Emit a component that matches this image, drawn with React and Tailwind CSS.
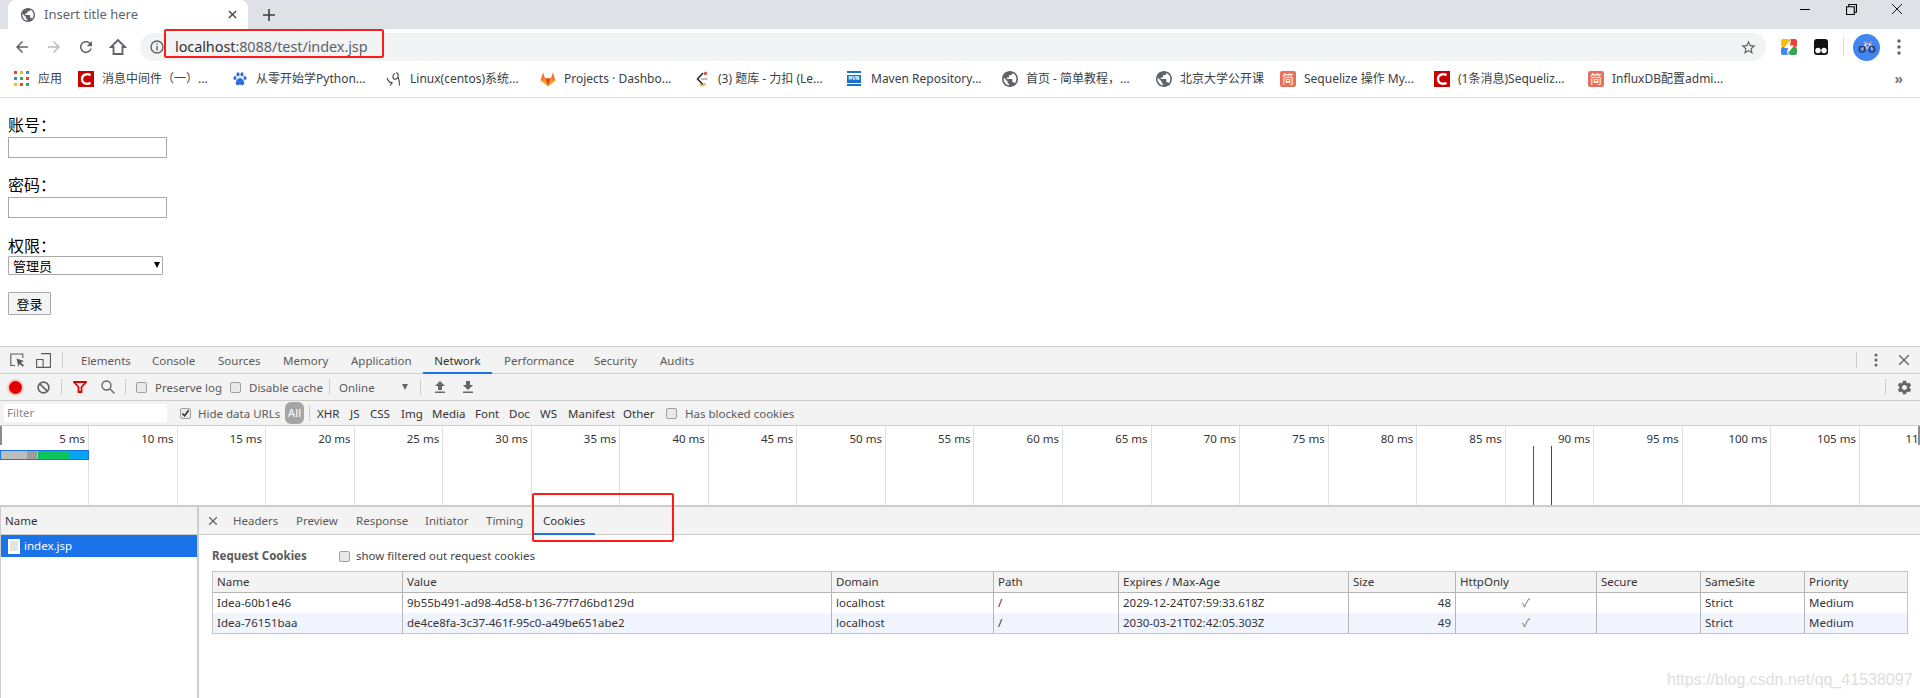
import React from "react";

const DEV = "font-['Noto_Sans','Noto_Sans_CJK_SC',sans-serif]";
// devtools labels sit one pixel under the centre of their row
const NUDGE = "relative top-px";

const GLOBE =
  "M12 2C6.48 2 2 6.48 2 12s4.48 10 10 10 10-4.48 10-10S17.52 2 12 2zm-1 17.93c-3.95-.49-7-3.85-7-7.93 0-.62.08-1.21.21-1.79L9 15v1c0 1.1.9 2 2 2v1.93zm6.9-2.54c-.26-.81-1-1.39-1.9-1.39h-1v-3c0-.55-.45-1-1-1H8v-2h2c.55 0 1-.45 1-1V7h2c1.1 0 2-.9 2-2v-.41c2.93 1.19 5 4.06 5 7.41 0 2.08-.8 3.97-2.1 5.39z";
const GEAR =
  "M19.14 12.94c.04-.3.06-.61.06-.94 0-.32-.02-.64-.07-.94l2.03-1.58c.18-.14.23-.41.12-.61l-1.92-3.32c-.12-.22-.37-.29-.59-.22l-2.39.96c-.5-.38-1.03-.7-1.62-.94l-.36-2.54c-.04-.24-.24-.41-.48-.41h-3.84c-.24 0-.43.17-.47.41l-.36 2.54c-.59.24-1.13.57-1.62.94l-2.39-.96c-.22-.08-.47 0-.59.22L2.74 8.87c-.12.21-.08.47.12.61l2.03 1.58c-.05.3-.09.63-.09.94s.02.64.07.94l-2.03 1.58c-.18.14-.23.41-.12.61l1.92 3.32c.12.22.37.29.59.22l2.39-.96c.5.38 1.03.7 1.62.94l.36 2.54c.05.24.24.41.48.41h3.84c.24 0 .44-.17.47-.41l.36-2.54c.59-.24 1.13-.56 1.62-.94l2.39.96c.22.08.47 0 .59-.22l1.92-3.32c.12-.22.07-.47-.12-.61l-2.01-1.58zM12 15.6c-1.98 0-3.6-1.62-3.6-3.6s1.62-3.6 3.6-3.6 3.6 1.62 3.6 3.6-1.62 3.6-3.6 3.6z";

const Globe = ({ className }) => (
  <svg viewBox="2 2 20 20" className={className} fill="#5f6368">
    <path d={GLOBE} />
  </svg>
);

const Jian = () => (
  <span className="flex h-4 w-4 items-center justify-center rounded-[2px] bg-[#ea6f5a] font-['Noto_Sans_CJK_SC'] text-[12px] leading-none text-white">
    简
  </span>
);

const RedC = () => (
  <span className="flex h-4 w-4 items-center justify-center bg-[#c90000]">
    <svg viewBox="0 0 16 16" className="h-4 w-4">
      <path d="M12.5 4.2C11.4 3.4 10 3 8.6 3.2 5.9 3.6 4 5.5 4 8s1.9 4.4 4.6 4.8c1.4.2 2.8-.2 3.9-1" fill="none" stroke="#fff" strokeWidth="2.4" />
    </svg>
  </span>
);

const AppsIcon = () => (
  <svg viewBox="0 0 15 15" className="h-[15px] w-[15px]">
    <rect x="0" y="0" width="3" height="3" fill="#ea4335" />
    <rect x="6" y="0" width="3" height="3" fill="#fbbc04" />
    <rect x="12" y="0" width="3" height="3" fill="#4285f4" />
    <rect x="0" y="6" width="3" height="3" fill="#4285f4" />
    <rect x="6" y="6" width="3" height="3" fill="#34a853" />
    <rect x="12" y="6" width="3" height="3" fill="#ea4335" />
    <rect x="0" y="12" width="3" height="3" fill="#fbbc04" />
    <rect x="6" y="12" width="3" height="3" fill="#ea4335" />
    <rect x="12" y="12" width="3" height="3" fill="#34a853" />
  </svg>
);

const Paw = () => (
  <svg viewBox="0 0 16 16" className="h-4 w-4" fill="#2f6fe0">
    <ellipse cx="3" cy="7" rx="1.6" ry="2" />
    <ellipse cx="6" cy="3.4" rx="1.6" ry="2.1" />
    <ellipse cx="10" cy="3.4" rx="1.6" ry="2.1" />
    <ellipse cx="13" cy="7" rx="1.6" ry="2" />
    <path d="M8 7c-2 0-4 2.600-4.300 4.500C3.500 13.500 5 14.500 6.500 14c1-.3 2-.3 3 0 1.500.5 3-.5 2.800-2.500C12 9.600 10 7 8 7z" />
  </svg>
);

const LinuxIcon = () => (
  <svg viewBox="0 0 16 16" className="h-4 w-4" fill="none" stroke="#444" strokeWidth="1.100">
    <path d="M1 7c1 3 3 5 5.500 4.500M10 1.500c2 .5 2.500 2.500 2 4.500 1 2.500 1.500 5 1.500 8.500M12 6c-1 2-3 3-4.500 1.500C6 6 7.500 3 9 2.500M6.500 11.500 4 14.500" />
  </svg>
);

const GitlabIcon = () => (
  <svg viewBox="0 0 16 16" className="h-4 w-4">
    <path d="M8 15 .6 9.500 3 1.500l2.200 6h5.600l2.200-6 2.400 8z" fill="#fc6d26" />
    <path d="M8 15 5.200 7.500h5.600z" fill="#e24329" />
    <path d="M.6 9.500 8 15 5.200 7.500z" fill="#fca326" />
    <path d="M15.400 9.500 8 15l2.800-7.500z" fill="#fca326" />
  </svg>
);

const LeetIcon = () => (
  <svg viewBox="0 0 16 16" className="h-4 w-4" fill="none" strokeWidth="1.500">
    <path d="M9 2 3.500 8l5.500 5.500" stroke="#222" />
    <path d="M6 13c1.500 2 4 1.500 5.500-.5" stroke="#e8a33d" />
    <path d="M7 8h6.500" stroke="#aaa" />
    <circle cx="11.500" cy="2.500" r="1.700" fill="#d9534f" stroke="none" />
  </svg>
);

const MvnIcon = () => (
  <span className="flex h-[15px] w-[14px] flex-col justify-between bg-white">
    <span className="h-[2px] bg-[#1a73c8]" />
    <span className="bg-[#1a73c8] text-center font-['Liberation_Mono'] text-[6px] font-bold leading-[8px] text-white">MVN</span>
    <span className="h-[2px] bg-[#1a73c8]" />
  </span>
);

const bookmarks = [
  { text: "应用", icon: <AppsIcon />, w: "w-[64px]", gap: "gap-[9px]" },
  { text: "消息中间件（一）...", icon: <RedC />, w: "w-[154px]", gap: "gap-2" },
  { text: "从零开始学Python...", icon: <Paw />, w: "w-[154px]", gap: "gap-2" },
  { text: "Linux(centos)系统...", icon: <LinuxIcon />, w: "w-[154px]", gap: "gap-2" },
  { text: "Projects · Dashbo...", icon: <GitlabIcon />, w: "w-[154px]", gap: "gap-2" },
  { text: "(3) 题库 - 力扣 (Le...", icon: <LeetIcon />, w: "w-[153px]", gap: "gap-2" },
  { text: "Maven Repository...", icon: <MvnIcon />, w: "w-[155px]", gap: "gap-[10px]" },
  { text: "首页 - 简单教程，...", icon: <Globe className="h-4 w-4" />, w: "w-[154px]", gap: "gap-2" },
  { text: "北京大学公开课", icon: <Globe className="h-4 w-4" />, w: "w-[124px]", gap: "gap-2" },
  { text: "Sequelize 操作 My...", icon: <Jian />, w: "w-[154px]", gap: "gap-2" },
  { text: "(1条消息)Sequeliz...", icon: <RedC />, w: "w-[154px]", gap: "gap-2" },
  { text: "InfluxDB配置admi...", icon: <Jian />, w: "w-[150px]", gap: "gap-2" },
];

const TabStrip = () => (
  <div className="flex h-[29px] items-stretch bg-[#dee1e6] pl-2">
    <div className="flex w-[240px] items-center rounded-t-[8px] bg-white pl-[13px] pr-[11px]">
      <Globe className="h-[14px] w-[14px]" />
      <span className="ml-[9px] flex-1 text-[13px] text-[#5f6368]">Insert title here</span>
      <svg viewBox="0 0 10 10" className="h-[9px] w-[9px]" stroke="#444" strokeWidth="1.500">
        <path d="M1 1l8 8M9 1l-8 8" />
      </svg>
    </div>
    <div className="ml-[15px] flex items-center">
      <svg viewBox="0 0 12 12" className="h-[12px] w-[12px]" stroke="#3c4043" strokeWidth="1.600">
        <path d="M6 0v12M0 6h12" />
      </svg>
    </div>
    <div className="ml-auto flex pt-[4px]">
      <div className="flex h-[10px] w-[46px] items-center justify-center">
        <span className="h-px w-[10px] bg-black" />
      </div>
      <div className="flex h-[10px] w-[46px] items-center justify-center">
        <svg viewBox="0 0 10 10" className="h-[11px] w-[11px]" fill="none" stroke="#000">
          <path d="M.5 2.500h7v7h-7zM2.500 2.500v-2h7v7h-2" />
        </svg>
      </div>
      <div className="flex h-[10px] w-[46px] items-center justify-center">
        <svg viewBox="0 0 10 10" className="h-[10px] w-[10px]" stroke="#000" strokeWidth=".9">
          <path d="M0 0l10 10M10 0L0 10" />
        </svg>
      </div>
    </div>
  </div>
);

const NavIcon = ({ d, fill = "#5f6368" }) => (
  <div className="flex w-[32px] items-center justify-center">
    <svg viewBox="0 0 24 24" className="h-[18px] w-[18px]" fill={fill}>
      <path d={d} />
    </svg>
  </div>
);

const Toolbar = () => (
  <div className="flex h-[32px] items-stretch bg-white pl-[6px] pt-[4px]">
    <NavIcon d="M20 11H7.830l5.590-5.590L12 4l-8 8 8 8 1.410-1.410L7.830 13H20v-2z" />
    <NavIcon d="M12 4l-1.410 1.410L16.170 11H4v2h12.170l-5.580 5.590L12 20l8-8z" fill="#b9bcc0" />
    <NavIcon d="M17.650 6.350C16.200 4.900 14.210 4 12 4c-4.420 0-7.990 3.580-7.990 8s3.570 8 7.990 8c3.730 0 6.840-2.550 7.730-6h-2.080c-.82 2.330-3.040 4-5.650 4-3.310 0-6-2.690-6-6s2.690-6 6-6c1.660 0 3.140.69 4.220 1.780L13 11h7V4l-2.350 2.350z" />
    <div className="flex w-[32px] items-center justify-center">
      <svg viewBox="0 0 18 18" className="h-[18px] w-[18px]" fill="none" stroke="#5f6368" strokeWidth="1.800">
        <path d="M9 2 2 9h2.500v7h9V9H16z" />
      </svg>
    </div>
    <div className="ml-[6px] flex w-[1626px] items-center rounded-full bg-[#f1f3f4] pl-[10px]">
      <svg viewBox="0 0 14 14" className="h-[14px] w-[14px]" fill="none" stroke="#5f6368" strokeWidth="1.400">
        <circle cx="7" cy="7" r="6" />
        <path d="M7 6v4.500M7 3.500v1.300" />
      </svg>
      <span className="ml-[11px] text-[14.500px] tracking-[-.1px] text-[#5f6368]">
        <span className="text-[#333]">localhost</span>:8088/test/index.jsp
      </span>
      <svg viewBox="0 0 24 24" className="ml-auto mr-[9px] h-[17px] w-[17px]" fill="#5f6368">
        <path d="M22 9.240l-7.190-.62L12 2 9.190 8.630 2 9.240l5.460 4.730L5.820 21 12 17.270 18.180 21l-1.630-7.030L22 9.240zM12 15.400l-3.760 2.270 1-4.280-3.320-2.880 4.380-.38L12 6.100l1.710 4.040 4.380.38-3.320 2.880 1 4.280L12 15.400z" />
      </svg>
    </div>
    <div className="flex items-center pl-[15px]">
      <svg viewBox="0 0 16 16" className="h-4 w-4">
        <rect width="8" height="8" fill="#fbbc04" rx="2" />
        <rect x="8" width="8" height="8" fill="#ea4335" rx="2" />
        <rect y="8" width="8" height="8" fill="#4285f4" rx="2" />
        <rect x="8" y="8" width="8" height="8" fill="#34a853" rx="2" />
        <path d="M10 0 3 9h4l-1.500 7L13 6.500H9z" fill="#fff" />
      </svg>
      <svg viewBox="0 0 16 16" className="ml-[16px] h-4 w-4">
        <rect x="1" width="14" height="16" rx="3" fill="#111" />
        <circle cx="5" cy="11.500" r="2.700" fill="#fff" />
        <circle cx="11" cy="11.500" r="2.700" fill="#fff" />
      </svg>
      <span className="ml-[14px] h-[20px] w-px bg-[#dadce0]" />
      <span className="ml-[9px] flex h-[27px] w-[27px] items-center justify-center rounded-full bg-[#4285f4]">
        <svg viewBox="0 0 20 14" className="h-[14px] w-[18px]" fill="none">
          <path d="M4.500 9.500 8 3.500h6l1.500 6M8 3.500l2.500 6 3.500-6" stroke="#e9eefc" strokeWidth="1" />
          <circle cx="4.500" cy="9.500" r="3.200" stroke="#3a2f3f" strokeWidth="1.500" />
          <circle cx="15.500" cy="9.500" r="3.200" stroke="#3a2f3f" strokeWidth="1.500" />
          <path d="M6.500 1.500h3M13 1.500h2" stroke="#f2a25c" strokeWidth="1.300" />
        </svg>
      </span>
      <svg viewBox="0 0 4 16" className="ml-[17px] h-[16px] w-[4px]" fill="#5f6368">
        <circle cx="2" cy="2" r="1.700" />
        <circle cx="2" cy="8" r="1.700" />
        <circle cx="2" cy="14" r="1.700" />
      </svg>
    </div>
  </div>
);

const BookmarkBar = () => (
  <div className="flex h-[37px] items-center border-b border-[#dcdcdc] bg-white pb-[1px] pl-[14px] font-['Noto_Sans','Noto_Sans_CJK_SC',sans-serif] text-[12px] text-[#3c4043]">
    {bookmarks.map((b) => (
      <div key={b.text} className={`flex items-center whitespace-nowrap ${b.w} ${b.gap}`}>
        {b.icon}
        <span>{b.text}</span>
      </div>
    ))}
    <span className="ml-auto pr-[17px] text-[14px] font-bold text-[#777]">»</span>
  </div>
);

const LoginForm = () => (
  <div className="h-[248px] pl-2 pt-[18px] font-['Noto_Sans_CJK_SC','Noto_Sans',sans-serif] text-[16px] leading-[17px] text-black">
    <div className="h-[21px]">账号：</div>
    <input className="block h-[21px] w-[159px] border border-[#a9a9a9] bg-white" />
    <div className="mt-[18px] h-[21px]">密码：</div>
    <input className="block h-[21px] w-[159px] border border-[#a9a9a9] bg-white" />
    <div className="mt-[19px] h-[19px]">权限：</div>
    <div className="relative h-[19px] w-[155px]">
      <select className="block h-[19px] w-[155px] appearance-none rounded-[1px] border border-[#a9a9a9] bg-white pl-1 text-[13px] leading-[17px]">
        <option>管理员</option>
      </select>
      <span className="absolute left-[146px] top-[6px] h-0 w-0 border-x-[3px] border-t-[6px] border-x-transparent border-t-black" />
    </div>
    <button className="mt-[17px] block h-[23px] w-[43px] rounded-[1px] border border-[#a9a9a9] bg-[#f4f4f4] text-[13px] leading-[19px]">
      登录
    </button>
  </div>
);

const mainTabs = [
  ["Elements", "w-[71px] relative top-px"],
  ["Console", "w-[66px] relative top-px"],
  ["Sources", "w-[65px] relative top-px"],
  ["Memory", "w-[68px] relative top-px"],
  ["Application", "w-[72px] relative top-px"],
];

const MainTabs = () => (
  <div className="flex h-[28px] items-center border-y border-[#cccccc] bg-[#f3f3f3] text-[#5a5a5a]">
    <div className="flex w-[30px] justify-end pr-[6px]">
      <svg viewBox="0 0 14 14" className="h-[14px] w-[14px]" fill="none">
        <path d="M5 12.500H.8V1h12v4" stroke="#5a5a5a" strokeWidth="1.100" />
        <path d="M6.500 5.500 14 8l-3 1.500 3 3-1.300 1.300-3-3L8.500 14z" fill="#5a5a5a" />
      </svg>
    </div>
    <div className="flex w-[26px] justify-center">
      <svg viewBox="0 0 15 15" className="h-[15px] w-[15px]" fill="none" stroke="#5a5a5a" strokeWidth="1.100">
        <path d="M5 .6h9.400v13.800H5M.6 6.500h6.500v7.900H.6z" />
      </svg>
    </div>
    <span className="ml-[6px] h-[16px] w-px bg-[#ccc]" />
    <div className="ml-[18px] flex">
      {mainTabs.map(([t, w]) => (
        <span key={t} className={w}>{t}</span>
      ))}
    </div>
    <div className="relative flex h-full w-[69px] items-center justify-center text-[#333]">
      <span className={NUDGE}>Network</span>
      <span className="absolute bottom-[-1px] left-0 right-0 h-[2px] bg-[#1a73e8]" />
    </div>
    <span className={`ml-[12px] w-[90px] ${NUDGE}`}>Performance</span>
    <span className={`w-[66px] ${NUDGE}`}>Security</span>
    <span className={NUDGE}>Audits</span>
    <span className="ml-auto h-[16px] w-px bg-[#ccc]" />
    <svg viewBox="0 0 4 14" className="ml-[17px] h-[14px] w-[4px]" fill="#666">
      <circle cx="2" cy="2" r="1.500" />
      <circle cx="2" cy="7" r="1.500" />
      <circle cx="2" cy="12" r="1.500" />
    </svg>
    <svg viewBox="0 0 10 10" className="ml-[21px] mr-[11px] h-[10px] w-[10px]" stroke="#666" strokeWidth="1.400">
      <path d="M0 0l10 10M10 0L0 10" />
    </svg>
  </div>
);

const Check = ({ checked, className = "" }) => (
  <span className={`flex h-[11px] w-[11px] items-center justify-center rounded-[2px] border border-[#a0a0a0] bg-[#e9e9e9] ${className}`}>
    {checked && (
      <svg viewBox="0 0 10 10" className="h-[9px] w-[9px]" fill="none" stroke="#333" strokeWidth="1.800">
        <path d="M1.500 5 4 7.500 8.500 1.500" />
      </svg>
    )}
  </span>
);

const NetToolbar = () => (
  <div className="flex h-[27px] items-center border-b border-[#cccccc] bg-[#f3f3f3] text-[#5a5a5a]">
    <span className="ml-[9px] h-[13px] w-[13px] rounded-full bg-[#e00000] ring-2 ring-[#f9c9c9]" />
    <svg viewBox="0 0 14 14" className="ml-[15px] h-[13px] w-[13px]" fill="none" stroke="#666" strokeWidth="1.800">
      <circle cx="7" cy="7" r="5.800" />
      <path d="M3 3l8 8" />
    </svg>
    <span className="ml-[11px] h-[16px] w-px bg-[#ccc]" />
    <svg viewBox="0 0 14 12" className="ml-[11px] h-[12px] w-[14px]" fill="none" stroke="#e00000" strokeWidth="1.800">
      <path d="M1 1h12L8.500 6v5h-3V6z" />
    </svg>
    <svg viewBox="0 0 14 14" className="ml-[14px] h-[14px] w-[14px]" fill="none" stroke="#666" strokeWidth="1.400">
      <circle cx="5.500" cy="5.500" r="4.500" />
      <path d="M9 9l4.500 4.500" />
    </svg>
    <span className="ml-[10px] h-[16px] w-px bg-[#ccc]" />
    <Check className="ml-[10px]" />
    <span className={`ml-[8px] w-[75px] ${NUDGE}`}>Preserve log</span>
    <Check />
    <span className={`ml-[8px] w-[80px] ${NUDGE}`}>Disable cache</span>
    <span className="h-[16px] w-px bg-[#ccc]" />
    <span className={`ml-[9px] w-[63px] ${NUDGE}`}>Online</span>
    <span className="h-0 w-0 border-x-[3.500px] border-t-[6px] border-x-transparent border-t-[#666]" />
    <span className="ml-[12px] h-[16px] w-px bg-[#ccc]" />
    <svg viewBox="0 0 12 12" className="ml-[13px] h-[12px] w-[12px]" fill="#666">
      <path d="M6 0 1 5h3v4h4V5h3zM1 10.500h10V12H1z" />
    </svg>
    <svg viewBox="0 0 12 12" className="ml-[16px] h-[12px] w-[12px]" fill="#666">
      <path d="M6 9 1 4h3V0h4v4h3zM1 10.500h10V12H1z" />
    </svg>
    <span className="ml-auto h-[16px] w-px bg-[#ccc]" />
    <svg viewBox="0 0 24 24" className="ml-[10px] mr-[7px] h-[17px] w-[17px]" fill="#666">
      <path d={GEAR} />
    </svg>
  </div>
);

const types = [
  ["XHR", "w-[33px] relative top-px"],
  ["JS", "w-[20px] relative top-px"],
  ["CSS", "w-[31px] relative top-px"],
  ["Img", "w-[31px] relative top-px"],
  ["Media", "w-[43px] relative top-px"],
  ["Font", "w-[34px] relative top-px"],
  ["Doc", "w-[31px] relative top-px"],
  ["WS", "w-[28px] relative top-px"],
  ["Manifest", "w-[55px] relative top-px"],
  ["Other", "w-[43px] relative top-px"],
];

const FilterBar = () => (
  <div className="flex h-[25px] items-center border-b border-[#cccccc] bg-[#f3f3f3] text-[#5a5a5a]">
    <div className="ml-[4px] flex h-[18px] w-[163px] items-center bg-white pl-[3px] text-[#8a8a8a]">Filter</div>
    <Check checked className="ml-[13px]" />
    <span className={`ml-[7px] w-[87px] ${NUDGE}`}>Hide data URLs</span>
    <span className="flex h-[22px] w-[19px] items-center justify-center rounded-[6px] bg-[#a5a5a5] text-white">All</span>
    <span className="ml-[5px] h-[16px] w-px bg-[#ccc]" />
    <div className="ml-[7px] flex text-[#333]">
      {types.map(([t, w]) => (
        <span key={t} className={w}>{t}</span>
      ))}
    </div>
    <Check />
    <span className={`ml-[8px] ${NUDGE}`}>Has blocked cookies</span>
  </div>
);

const ticks = [5, 10, 15, 20, 25, 30, 35, 40, 45, 50, 55, 60, 65, 70, 75, 80, 85, 90, 95, 100, 105, 110];

const Overview = () => (
  <div className="relative flex h-[81px] overflow-hidden border-b-2 border-[#cccccc] bg-white pl-px">
    {ticks.map((t, i) => (
      <div key={t} className={`h-full shrink-0 whitespace-nowrap border-r border-[#e0e0e0] pr-[3px] pt-[4px] text-right leading-[18px] text-[#333] ${i === 0 ? "w-[88px]" : "w-[88.55px]"}`}>
        {t} ms
      </div>
    ))}
    <span className="absolute left-0 top-0 h-[19px] w-[2px] bg-[#8d8d8d]" />
    <span className="absolute right-0 top-0 h-[19px] w-[2px] bg-[#8d8d8d]" />
    <div className="absolute left-0 top-[24px] flex h-[10px] w-[89px] border border-[#1a73e8]">
      <span className="w-[26px] bg-[#bdbdbd]" />
      <span className="w-[10px] bg-[#9e9e9e]" />
      <span className="w-[1px] bg-[#bdbdbd]" />
      <span className="w-[31px] bg-[#0fc45f]" />
      <span className="flex-1 bg-[#00a6f5]" />
    </div>
    <span className="absolute left-[1533px] top-[20px] h-[60px] w-px bg-[#1a5fc0]" />
    <span className="absolute left-[1551px] top-[20px] h-[60px] w-px bg-[#b01a22]" />
  </div>
);

const detailTabs = [
  ["Headers", "w-[63px]"],
  ["Preview", "w-[60px]"],
  ["Response", "w-[69px]"],
  ["Initiator", "w-[61px]"],
  ["Timing", "w-[47px]"],
];

const columns = ["w-[190px]", "w-[429px]", "w-[162px]", "w-[125px]", "w-[230px]", "w-[107px]", "w-[141px]", "w-[104px]", "w-[104px]", "flex-1"];
const headers = ["Name", "Value", "Domain", "Path", "Expires / Max-Age", "Size", "HttpOnly", "Secure", "SameSite", "Priority"];
const rows = [
  ["Idea-60b1e46", "9b55b491-ad98-4d58-b136-77f7d6bd129d", "localhost", "/", "2029-12-24T07:59:33.618Z", "48", "✓", "", "Strict", "Medium"],
  ["Idea-76151baa", "de4ce8fa-3c37-461f-95c0-a49be651abe2", "localhost", "/", "2030-03-21T02:42:05.303Z", "49", "✓", "", "Strict", "Medium"],
];

const CookieTable = () => (
  <div className="mt-[6px] ml-[13px] w-[1696px] border border-[#c4c4c4] text-[#333]">
    <div className="flex h-[21px] items-stretch border-b border-[#b5b5b5] bg-[#f3f3f3]">
      {headers.map((h, i) => (
        <div key={h} className={`flex items-center px-[4px] ${columns[i]} ${i < 9 ? "border-r border-[#b5b5b5]" : ""}`}>
          {h}
        </div>
      ))}
    </div>
    {rows.map((r, ri) => (
      <div key={r[0]} className={`flex h-[20px] items-stretch ${ri === 1 ? "bg-[#f0f5fd]" : "bg-white"}`}>
        {r.map((c, i) => (
          <div
            key={i}
            className={`flex items-center px-[4px] ${columns[i]} ${i < 9 ? "border-r border-[#b5b5b5]" : ""} ${i === 5 ? "justify-end" : ""} ${i === 6 ? "justify-center text-[#777]" : ""}`}
          >
            {c}
          </div>
        ))}
      </div>
    ))}
  </div>
);

const Details = () => (
  <div className="flex h-[191px] border-l border-[#cccccc] bg-white">
    <div className="w-[198px] shrink-0 border-r-2 border-[#cccccc]">
      <div className="flex h-[28px] items-center border-b border-[#cccccc] bg-[#f3f3f3] pl-[4px] text-[#333]">Name</div>
      <div className="flex h-[22px] items-center bg-[#1a73e8] pl-[7px] text-white">
        <svg viewBox="0 0 12 15" className="h-[15px] w-[12px]">
          <path d="M0 0h12v15H0z" fill="#fff" />
          <path d="M2 3h8M2 5h8M2 7h8M2 9h8M2 11h8" stroke="#c8c8c8" strokeWidth="1" />
        </svg>
        <span className="ml-[4px]">index.jsp</span>
      </div>
    </div>
    <div className="flex-1">
      <div className="flex h-[28px] items-center border-b border-[#cccccc] bg-[#f3f3f3] text-[#5a5a5a]">
        <div className="w-[34px] pl-[10px]">
          <svg viewBox="0 0 8 8" className="h-[8px] w-[8px]" stroke="#666" strokeWidth="1.300">
            <path d="M0 0l8 8M8 0L0 8" />
          </svg>
        </div>
        {detailTabs.map(([t, w]) => (
          <span key={t} className={w}>{t}</span>
        ))}
        <div className="relative flex h-full w-[62px] items-center pl-[10px] text-[#333]">
          Cookies
          <span className="absolute bottom-[-1px] left-0 right-0 h-[2px] bg-[#1a73e8]" />
        </div>
      </div>
      <div className="ml-[13px] mt-[12px] flex h-[18px] items-center text-[#5a5a5a]">
        <span className="w-[127px] font-bold">Request Cookies</span>
        <Check />
        <span className="ml-[6px] text-[#444]">show filtered out request cookies</span>
      </div>
      <CookieTable />
    </div>
  </div>
);

export default function App() {
  return (
    <div className="relative h-[698px] w-[1920px] overflow-hidden bg-white font-['Noto_Sans',sans-serif]">
      <TabStrip />
      <Toolbar />
      <BookmarkBar />
      <LoginForm />
      <div className={`${DEV} text-[11.500px] leading-none`}>
        <MainTabs />
        <NetToolbar />
        <FilterBar />
        <Overview />
        <Details />
      </div>

      {/* annotation boxes drawn over the screenshot */}
      <span className="absolute left-[164px] top-[29px] h-[29px] w-[220px] rounded-[2px] border-2 border-[#ff1a1a]" />
      <span className="absolute left-[532px] top-[493px] h-[49px] w-[142px] rounded-[2px] border-2 border-[#ff1a1a]" />
      <span className="absolute left-[1667px] top-[669px] font-['Liberation_Sans'] text-[16px] leading-[22px] text-[#dedede]">
        https://blog.csdn.net/qq_41538097
      </span>
    </div>
  );
}
